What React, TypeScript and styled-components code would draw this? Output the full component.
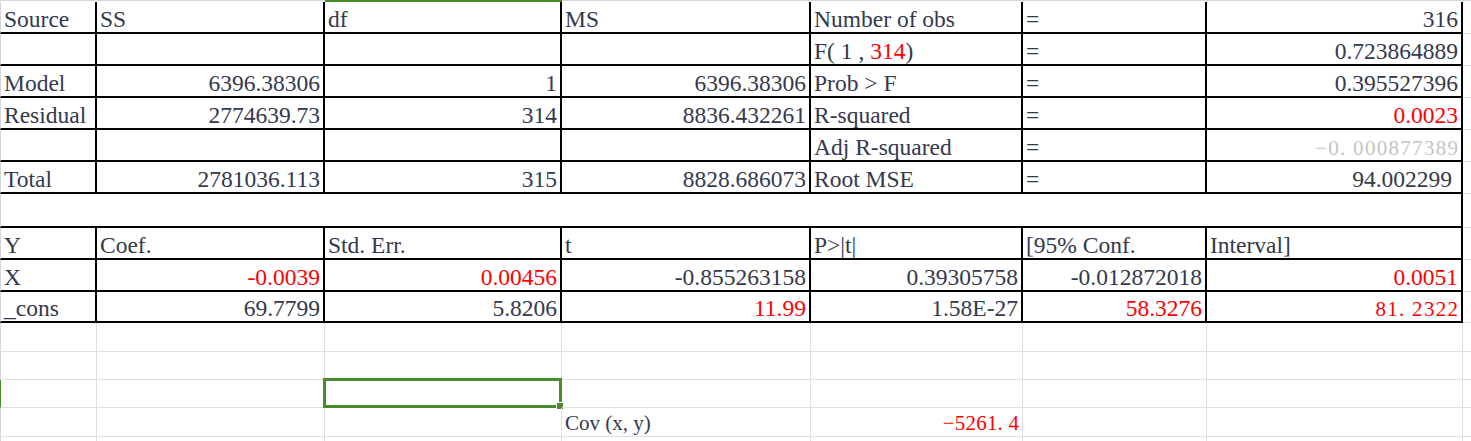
import React from 'react';
import styled, { createGlobalStyle } from 'styled-components';

type Line = 'black' | 'grid' | 'none';
type Tone = 'ink' | 'red' | 'muted';

const C = {
  ink: '#34394d',
  red: '#ff0000',
  muted: '#c4c4c4',
  green: '#4a8b2c',
  grid: '#dfdfdf',
  edge: '#d6d6d6',
  black: '#000000',
};

const COLUMN_WIDTHS = [97, 228, 237, 249, 212, 184, 256];
const ROW_HEIGHTS = [32, 32, 32, 32, 32, 32, 34, 32, 32, 31, 29, 28, 28, 29, 28];

const GlobalStyle = createGlobalStyle`
  html, body {
    margin: 0;
    padding: 0;
    background: #ffffff;
    overflow: hidden;
  }
  body {
    font-family: "Liberation Serif", "Times New Roman", serif;
  }
`;

const toneColor = (t?: Tone) => (t === 'red' ? C.red : t === 'muted' ? C.muted : C.ink);

const lineRule = (l: Line | undefined, side: 'right' | 'bottom') => {
  if (!l || l === 'none') return '';
  if (l === 'black') return `border-${side}: 2px solid ${C.black};`;
  return `border-${side}: 1px solid ${C.grid};`;
};

const Sheet = styled.div`
  display: grid;
  grid-template-columns: ${COLUMN_WIDTHS.map((w) => `${w}px`).join(' ')} 1fr;
  grid-template-rows: 2px ${ROW_HEIGHTS.map((h) => `${h}px`).join(' ')};
  width: 100vw;
  height: 441px;
  overflow: hidden;
  background: #ffffff;
  font-family: "Liberation Serif", "Times New Roman", serif;
  font-size: 23.5px;
  color: ${C.ink};
`;

const ColumnEdge = styled.div<{ $active?: boolean }>`
  background: ${(p) =>
    p.$active ? C.green : `linear-gradient(to bottom, ${C.edge} 1px, #ffffff 1px)`};
`;

const Cell = styled.div<{
  $r?: Line;
  $b?: Line;
  $edge?: 'plain' | 'active';
  $align?: 'left' | 'right';
  $tone?: Tone;
  $span?: number;
  $padR?: number;
  $lower?: boolean;
}>`
  box-sizing: border-box;
  position: relative;
  min-width: 0;
  display: flex;
  align-items: flex-end;
  justify-content: ${(p) => (p.$align === 'right' ? 'flex-end' : 'flex-start')};
  padding: 0 ${(p) => p.$padR ?? 3}px ${(p) => (p.$lower ? 2 : 1)}px 3px;
  line-height: 1;
  white-space: pre;
  color: ${(p) => toneColor(p.$tone)};
  ${(p) => lineRule(p.$r, 'right')}
  ${(p) => lineRule(p.$b, 'bottom')}
  ${(p) => (p.$edge ? `border-left: 1px solid ${p.$edge === 'active' ? C.green : C.edge};` : '')}
  ${(p) => (p.$span ? `grid-column: span ${p.$span};` : '')}
`;

const Red = styled.span`
  color: ${C.red};
`;

const WideText = styled.span<{ $spacing: number }>`
  font-family: "Liberation Serif", "Noto Sans CJK SC", serif;
  font-size: 21px;
  letter-spacing: ${(p) => p.$spacing}px;
  margin-right: ${(p) => -p.$spacing}px;
`;

const Selection = styled.div`
  position: absolute;
  left: -2px;
  top: -2px;
  width: 239px;
  height: 30px;
  box-sizing: border-box;
  border: 3px solid ${C.green};
  pointer-events: none;
`;

const FillHandle = styled.div`
  position: absolute;
  right: -5px;
  bottom: -5px;
  width: 8px;
  height: 8px;
  box-sizing: border-box;
  background: ${C.green};
  border: 1px solid #ffffff;
`;

type Spec = {
  text?: React.ReactNode;
  align?: 'left' | 'right';
  tone?: Tone;
  wide?: number;
  padR?: number;
};

const L = (text?: React.ReactNode, extra: Partial<Spec> = {}): Spec => ({ text, ...extra });
const R = (text: React.ReactNode, tone?: Tone, extra: Partial<Spec> = {}): Spec => ({
  text,
  align: 'right',
  tone,
  ...extra,
});

const summaryRows: Spec[][] = [
  [L('Source'), L('SS'), L('df'), L('MS'), L('Number of obs'), L('='), R('316')],
  [
    L(),
    L(),
    L(),
    L(),
    L(
      <>
        {'F( 1 , '}
        <Red>314</Red>
        {')'}
      </>
    ),
    L('='),
    R('0.723864889'),
  ],
  [L('Model'), R('6396.38306'), R('1'), R('6396.38306'), L('Prob > F'), L('='), R('0.395527396')],
  [L('Residual'), R('2774639.73'), R('314'), R('8836.432261'), L('R-squared'), L('='), R('0.0023', 'red')],
  [L(), L(), L(), L(), L('Adj R-squared'), L('='), R('−0. 000877389', 'muted', { wide: 1.3 })],
  [L('Total'), R('2781036.113'), R('315'), R('8828.686073'), L('Root MSE'), L('='), R('94.002299', 'ink', { padR: 9 })],
];

const coefRows: Spec[][] = [
  [L('Y'), L('Coef.'), L('Std. Err.'), L('t'), L('P>|t|'), L('[95% Conf.'), L('Interval]')],
  [
    L('X'),
    R('-0.0039', 'red'),
    R('0.00456', 'red'),
    R('-0.855263158'),
    R('0.39305758'),
    R('-0.012872018'),
    R('0.0051', 'red'),
  ],
  [
    L('_cons'),
    R('69.7799'),
    R('5.8206'),
    R('11.99', 'red'),
    R('1.58E-27'),
    R('58.3276', 'red'),
    R('81. 2322', 'red', { wide: 1.3 }),
  ],
];

const lowerRows: Spec[][] = [
  [L(), L(), L(), L(), L(), L(), L()],
  [L(), L(), L(), L(), L(), L(), L()],
  [L(), L(), L(), L(), L(), L(), L()],
  [L(), L(), L(), L('Cov (x, y)', { wide: 0 }), R('−5261. 4', 'red', { wide: 0.2 }), L(), L()],
  [L(), L(), L(), L(), L(), L(), L()],
];

const SELECTED_ROW = 2;
const SELECTED_COL = 2;

const content = (s: Spec) =>
  s.wide !== undefined ? <WideText $spacing={s.wide}>{s.text}</WideText> : s.text;

const TableRow: React.FC<{ row: Spec[]; rk: string }> = ({ row, rk }) => (
  <>
    {row.map((s, i) => (
      <Cell
        key={`${rk}-${i}`}
        $r="black"
        $b="black"
        $edge={i === 0 ? 'plain' : undefined}
        $align={s.align}
        $tone={s.tone}
        $padR={s.padR}
      >
        {content(s)}
      </Cell>
    ))}
    <Cell key={`${rk}-h`} $b="grid" />
  </>
);

export default function App() {
  return (
    <>
      <GlobalStyle />
      <Sheet>
        {Array.from({ length: 8 }).map((_, i) => (
          <ColumnEdge key={`edge-${i}`} $active={i === SELECTED_COL} />
        ))}

        {summaryRows.map((row, r) => (
          <TableRow key={`s${r}`} row={row} rk={`s${r}`} />
        ))}

        <Cell $span={7} $r="black" $b="black" $edge="plain" />
        <Cell $b="grid" />

        {coefRows.map((row, r) => (
          <TableRow key={`c${r}`} row={row} rk={`c${r}`} />
        ))}

        {lowerRows.map((row, r) => (
          <React.Fragment key={`l${r}`}>
            {row.map((s, i) => (
              <Cell
                key={`l${r}-${i}`}
                $r="grid"
                $b="grid"
                $lower
                $edge={i === 0 ? (r === SELECTED_ROW ? 'active' : 'plain') : undefined}
                $align={s.align}
                $tone={s.tone}
              >
                {content(s)}
                {r === SELECTED_ROW && i === SELECTED_COL && (
                  <Selection>
                    <FillHandle />
                  </Selection>
                )}
              </Cell>
            ))}
            <Cell $b="grid" />
          </React.Fragment>
        ))}
      </Sheet>
    </>
  );
}
